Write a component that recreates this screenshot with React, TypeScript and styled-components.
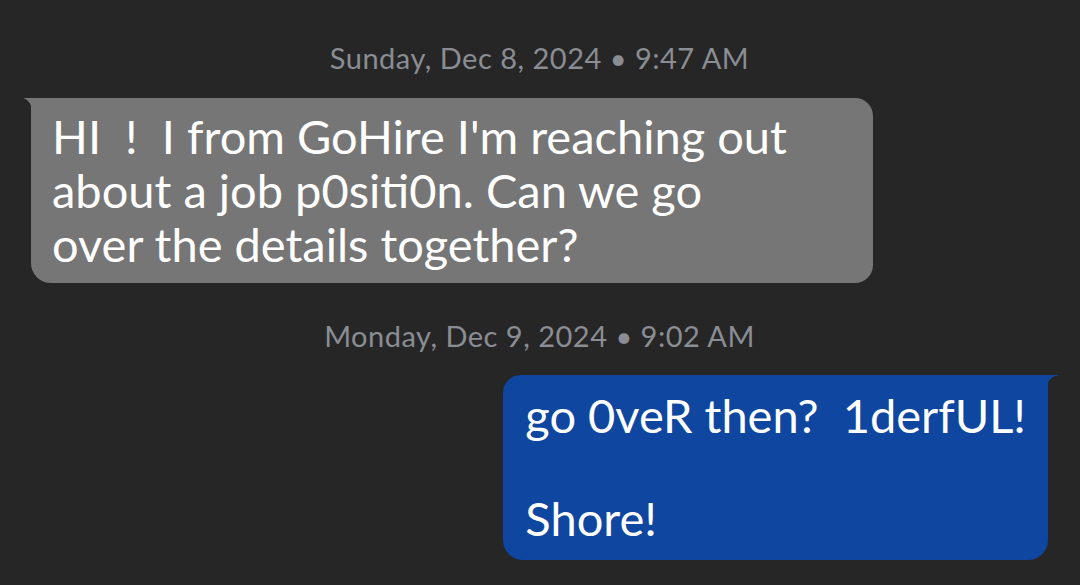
import React from "react";
import styled, { createGlobalStyle, css } from "styled-components";

const GlobalStyle = createGlobalStyle`
  html, body {
    margin: 0;
    padding: 0;
    background: #262626;
  }
  body {
    font-family: "Lato", "Noto Sans", sans-serif;
    -webkit-font-smoothing: antialiased;
  }
`;

const Thread = styled.div`
  width: 1080px;
  height: 585px;
  box-sizing: border-box;
  padding: 38px 32px 0 31px;
  display: flex;
  flex-direction: column;
  background: #262626;
  overflow: hidden;
`;

const Stamp = styled.div<{ $gapAfter: number }>`
  align-self: center;
  height: 40px;
  line-height: 40px;
  font-size: 29px;
  color: #8a8d93;
  letter-spacing: 0.5px;
  margin-bottom: ${(p) => p.$gapAfter}px;
  white-space: pre;
`;

const Bubble = styled.div<{ $mine?: boolean }>`
  position: relative;
  box-sizing: border-box;
  color: #ffffff;
  white-space: pre-wrap;
  font-size: 47px;
  ${(p) =>
    p.$mine
      ? css`
          align-self: flex-end;
          width: fit-content;
          background: #0f469f;
          line-height: 51.5px;
          padding: 15px 22px 15px 22px;
          border-radius: 18px 0 20px 20px;
          &::before {
            content: "";
            position: absolute;
            top: 0;
            right: -10px;
            width: 10px;
            height: 11px;
            background: radial-gradient(
              circle at 100% 100%,
              transparent 10px,
              #0f469f 10.6px
            );
          }
        `
      : css`
          align-self: flex-start;
          width: 842px;
          background: #767676;
          line-height: 54px;
          padding: 11px 76px 12px 21px;
          border-radius: 0 18px 18px 20px;
          &::before {
            content: "";
            position: absolute;
            top: 0;
            left: -11px;
            width: 11px;
            height: 11px;
            background: radial-gradient(
              circle at 0 100%,
              transparent 11px,
              #767676 11.6px
            );
          }
        `}
`;

const Spacer = styled.div<{ $h: number }>`
  height: ${(p) => p.$h}px;
  flex: none;
`;

export default function App() {
  return (
    <>
      <GlobalStyle />
      <Thread>
        <Stamp $gapAfter={20}>Sunday, Dec 8, 2024 • 9:47 AM</Stamp>
        <Bubble>
          {"HI  !  I from GoHire I'm reaching out about a job p0siti0n. Can we go over the details together?"}
        </Bubble>
        <Spacer $h={33} />
        <Stamp $gapAfter={19}>Monday, Dec 9, 2024 • 9:02 AM</Stamp>
        <Bubble $mine>{"go 0veR then?  1derfUL!\n\nShore!"}</Bubble>
      </Thread>
    </>
  );
}
